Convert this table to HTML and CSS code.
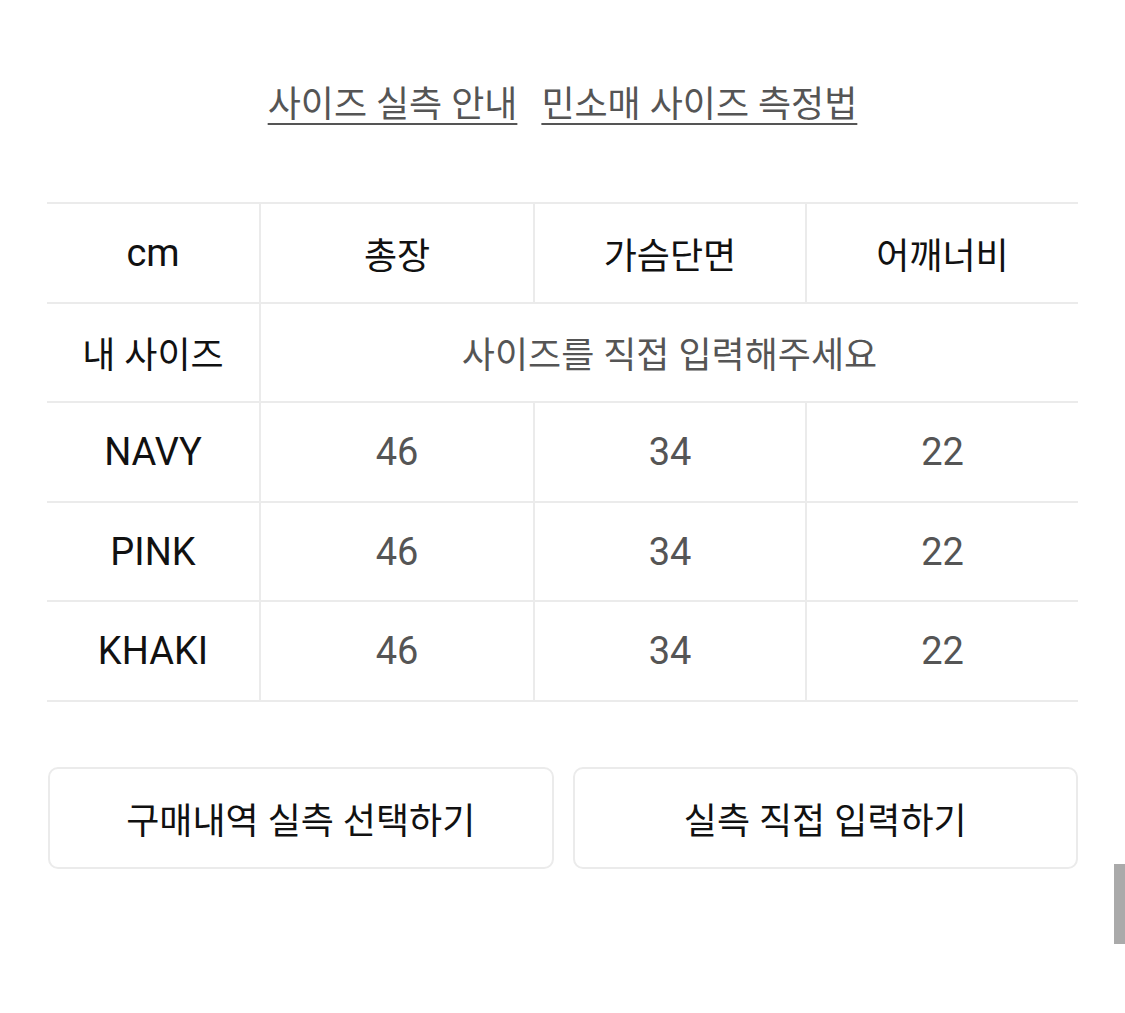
FILE: index.html
```html
<!DOCTYPE html>
<html lang="ko">
<head>
<meta charset="utf-8">
<link rel="stylesheet" href="styles.css">
</head>
<body>
<div class="page">
  <div class="links">
    <a class="link" href="#">사이즈 실측 안내</a>
    <a class="link" href="#">민소매 사이즈 측정법</a>
  </div>
  <table class="size-table">
    <colgroup>
      <col class="c1"><col class="c2"><col class="c3"><col class="c4">
    </colgroup>
    <tr><th class="lat">cm</th><th>총장</th><th>가슴단면</th><th>어깨너비</th></tr>
    <tr><th>내 사이즈</th><td colspan="3">사이즈를 직접 입력해주세요</td></tr>
    <tr><th class="lat">NAVY</th><td class="lat">46</td><td class="lat">34</td><td class="lat">22</td></tr>
    <tr><th class="lat">PINK</th><td class="lat">46</td><td class="lat">34</td><td class="lat">22</td></tr>
    <tr><th class="lat">KHAKI</th><td class="lat">46</td><td class="lat">34</td><td class="lat">22</td></tr>
  </table>
  <div class="buttons">
    <button class="btn">구매내역 실측 선택하기</button>
    <button class="btn">실측 직접 입력하기</button>
  </div>
</div>
<div class="scrollbar"></div>
</body>
</html>
```
FILE: styles.css
```css
html, body {
  margin: 0;
  padding: 0;
  background: #fff;
  font-family: "Roboto", "Noto Sans CJK KR", sans-serif;
}
.page {
  padding: 0 47px;
}
.links {
  display: flex;
  justify-content: center;
  gap: 24px;
  padding-top: 80px;
  height: 202px;
  box-sizing: border-box;
}
.link {
  color: #555;
  font-size: 36px;
  line-height: 50px;
  height: 50px;
  text-decoration: underline;
  text-decoration-thickness: 2px;
  text-underline-offset: 6px;
}
.size-table {
  width: 100%;
  border-collapse: collapse;
  table-layout: fixed;
}
.c1 { width: 213px; }
.c2 { width: 274px; }
.c3 { width: 272px; }
.c4 { width: 272px; }
.size-table th, .size-table td {
  height: 97.6px;
  padding: 0;
  text-align: center;
  font-size: 36px;
  border-top: 2px solid #ebebeb;
  border-bottom: 2px solid #ebebeb;
  border-left: 2px solid #ebebeb;
}
.size-table .lat { font-size: 38px; }
.size-table tr > :first-child { border-left: none; }
.size-table th {
  font-weight: 400;
  color: #111;
}
.size-table td {
  color: #555;
}
.buttons {
  display: flex;
  gap: 19px;
  margin-top: 65px;
  padding-left: 1px;
}
.btn {
  flex: 1;
  height: 102px;
  background: #fff;
  border: 2px solid #ebebeb;
  border-radius: 10px;
  font-family: "Roboto", "Noto Sans CJK KR", sans-serif;
  font-size: 36px;
  color: #111;
}
.scrollbar {
  position: fixed;
  right: 0;
  top: 864px;
  width: 11px;
  height: 80px;
  background: #aaa;
}
```
